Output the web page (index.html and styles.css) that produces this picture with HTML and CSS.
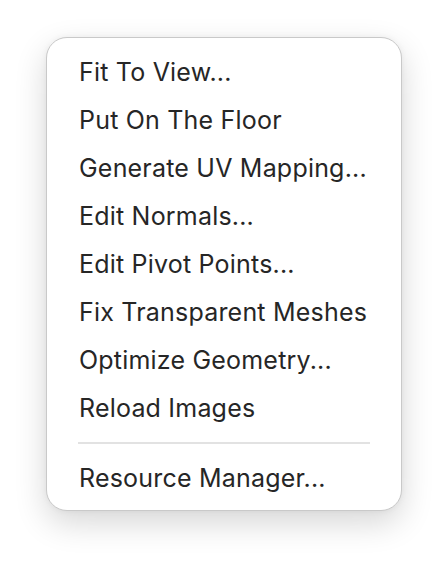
FILE: index.html
```html
<!DOCTYPE html>
<html>
<head>
<meta charset="utf-8">
<link rel="stylesheet" href="styles.css">
</head>
<body>
<div class="menu">
  <div class="item">Fit To View...</div>
  <div class="item">Put On The Floor</div>
  <div class="item">Generate UV Mapping...</div>
  <div class="item">Edit Normals...</div>
  <div class="item">Edit Pivot Points...</div>
  <div class="item">Fix Transparent Meshes</div>
  <div class="item">Optimize Geometry...</div>
  <div class="item">Reload Images</div>
  <div class="sep"></div>
  <div class="item">Resource Manager...</div>
</div>
</body>
</html>
```
FILE: styles.css
```css
html, body {
  margin: 0;
  padding: 0;
  background: #ffffff;
}
body {
  width: 448px;
  height: 566px;
  overflow: hidden;
  font-family: Inter, "Liberation Sans", sans-serif;
}
.menu {
  margin: 37px 0 0 46px;
  width: 356px;
  height: 474px;
  box-sizing: border-box;
  padding: 10px 0 8px 0;
  background: #ffffff;
  border: 1px solid #c9c9c9;
  border-radius: 21px;
  box-shadow: 0 12px 32px rgba(0, 0, 0, 0.16), 0 0 6px rgba(0,0,0,0.05);
  display: flex;
  flex-direction: column;
}
.item {
  flex: 0 0 48px;
  height: 48px;
  display: flex;
  align-items: center;
  padding-left: 32px;
  font-size: 25px;
  color: #262626;
  letter-spacing: 0.2px;
}
.sep {
  flex: 0 0 2px;
  height: 2px;
  background: #e2e2e2;
  margin: 10px 31px 10px 31px;
}
```
